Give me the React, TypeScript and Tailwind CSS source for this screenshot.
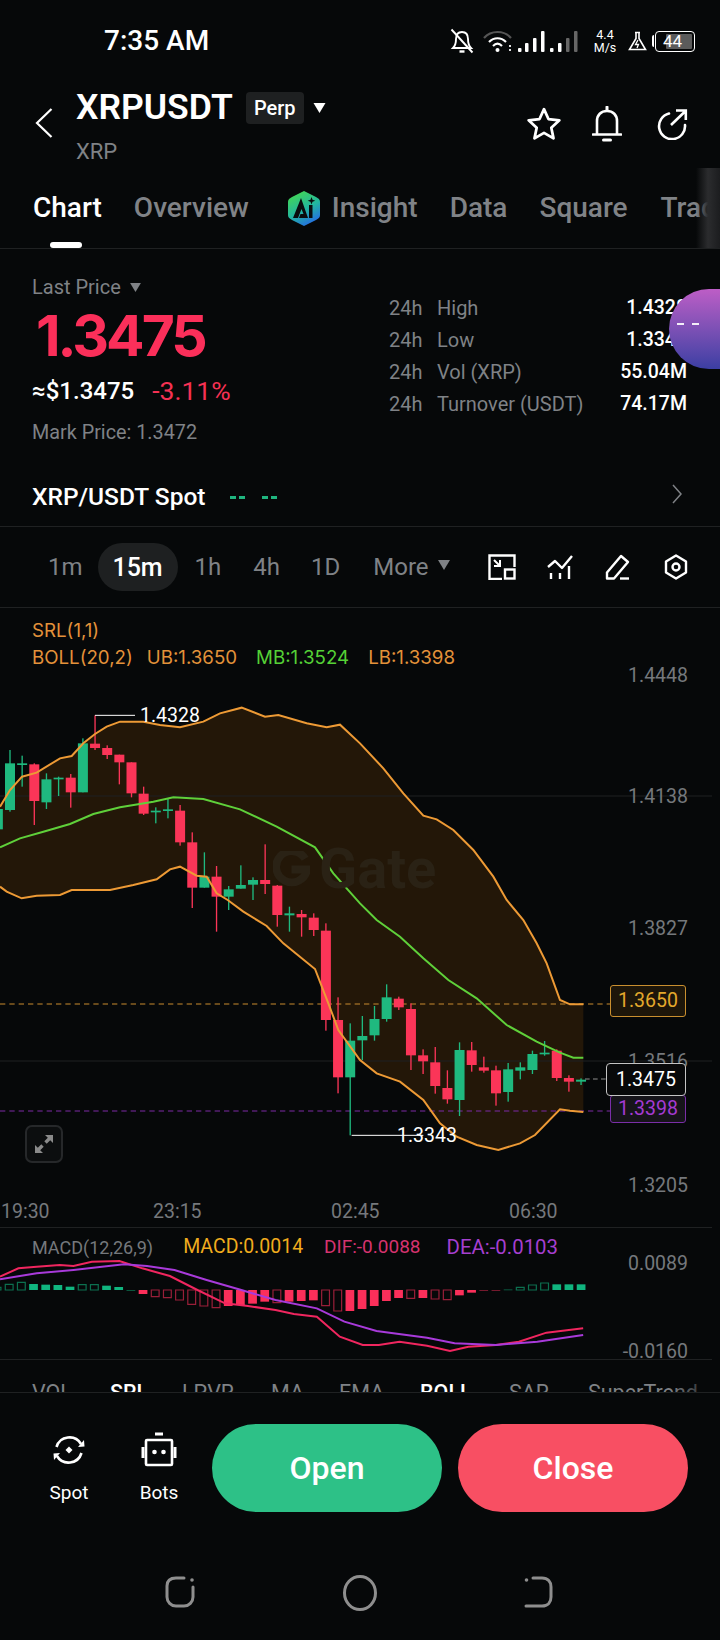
import { Fragment } from "react";

// [wickTop, bodyTop, bodyBottom, wickBottom, up?] in 1/3 px, chart viewBox units
type Candle = [number, number, number, number, boolean];

const UPPER_CANDLES: Candle[] = [
  [560, 597, 658, 680, true],
  [420, 460, 600, 605, true],
  [437, 460, 465, 530, true],
  [460, 463, 573, 645, false],
  [490, 508, 577, 597, true],
  [500, 503, 508, 558, true],
  [492, 503, 547, 593, false],
  [385, 400, 547, 547, true],
  [316, 401, 414, 420, false],
  [406, 414, 435, 447, false],
  [434, 434, 457, 523, false],
  [457, 457, 550, 562, false],
  [530, 551, 611, 615, false],
  [592, 602, 607, 640, true],
  [565, 598, 603, 625, true],
  [585, 602, 697, 707, false],
  [667, 697, 833, 894, false],
  [727, 800, 833, 833, true],
  [768, 800, 860, 965, false],
  [828, 838, 860, 900, true],
  [766, 825, 836, 836, true],
  [802, 810, 824, 870, true],
  [703, 810, 822, 852, false],
  [825, 827, 915, 950, false],
];

// same units, measured 870 lower (the second half of the chart)
const LOWER_CANDLES: Candle[] = [
  [20, 40, 46, 95, true],
  [30, 42, 52, 110, false],
  [40, 53, 90, 108, false],
  [70, 92, 360, 392, false],
  [292, 360, 532, 580, false],
  [370, 422, 532, 706, true],
  [348, 408, 421, 480, true],
  [318, 357, 406, 422, true],
  [253, 292, 357, 365, true],
  [290, 296, 322, 330, false],
  [310, 327, 466, 510, false],
  [448, 466, 484, 522, false],
  [441, 487, 558, 581, false],
  [511, 564, 598, 611, false],
  [427, 450, 600, 648, true],
  [426, 451, 495, 515, false],
  [470, 502, 512, 518, false],
  [497, 511, 580, 617, false],
  [489, 508, 576, 605, true],
  [487, 502, 512, 538, true],
  [452, 462, 510, 522, true],
  [423, 458, 463, 467, true],
  [448, 452, 534, 543, false],
  [526, 534, 545, 575, false],
  [535, 539, 545, 555, true],
];

const CANDLES: Candle[] = [
  ...UPPER_CANDLES,
  ...LOWER_CANDLES.map(
    ([a, b, c, d, up]) => [a + 870, b + 870, c + 870, d + 870, up] as Candle,
  ),
];

const BAND_UP =
  "0,590 30,540 66,500 110,488 180,445 215,438 250,400 285,372 320,350 360,335 430,335 480,345 540,352 610,335 660,310 725,293 795,320 835,315 920,340 980,352 1020,344 1080,400 1150,475 1210,550 1270,617 1310,628 1360,660 1420,720 1480,800 1520,870 1570,930 1610,1000 1640,1060 1680,1170 1710,1183 1750,1183";
const BAND_LOW =
  "1750,1506 1710,1502 1680,1498 1605,1575 1560,1600 1495,1620 1430,1605 1370,1580 1320,1540 1270,1470 1200,1415 1130,1390 1080,1350 1015,1260 985,1180 945,1077 850,1000 800,948 730,905 683,870 650,850 620,800 590,797 540,770 510,778 470,808 400,825 330,840 215,840 180,855 110,857 65,865 20,845 0,830";
const BAND_MID =
  "0,712 60,685 130,665 210,642 280,612 360,592 460,575 520,562 610,567 720,598 830,650 945,712 1000,790 1080,880 1130,930 1200,980 1270,1045 1345,1110 1430,1165 1520,1245 1610,1295 1680,1328 1720,1343 1750,1343";

const DIF_LINE =
  "0,230 40,205 80,200 130,195 160,198 200,185 260,183 310,205 370,228 430,270 490,310 540,318 600,330 640,342 690,350 740,410 790,435 825,435 870,425 930,437 980,453 1020,440 1080,435 1130,425 1190,398 1270,385";
const DEA_LINE =
  "0,238 80,220 160,210 270,193 320,198 380,210 450,240 520,268 600,300 690,325 750,365 820,393 930,413 990,430 1080,435 1170,425 1270,405";

// [edge of the bar in crop units, filled?]; baseline is 270
const HISTOGRAM: [number, boolean][] = [
  [262, false], [253, false], [247, false], [252, true], [254, true], [255, true], [260, true],
  [254, false], [254, false], [257, true], [261, true], [270, true],
  [282, true], [290, false], [293, false], [300, false], [313, false], [318, false],
  [323, false], [318, true], [315, true], [311, true], [305, true], [308, false],
  [305, true], [303, true], [301, true], [317, false], [333, false], [333, true],
  [327, true], [318, true], [303, true], [294, true], [295, false], [294, true],
  [297, false], [299, false], [286, true], [278, true], [272, true], [272, true],
  [268, true], [262, false], [255, false], [249, false], [253, true], [253, true], [253, true],
];

const STATS = [
  { label: "High", value: "1.4328" },
  { label: "Low", value: "1.3343" },
  { label: "Vol (XRP)", value: "55.04M" },
  { label: "Turnover (USDT)", value: "74.17M" },
];

const INDICATORS = [
  { name: "VOL", w: "w-[78px]" },
  { name: "SRL", w: "w-[72px]", on: true },
  { name: "LPVR", w: "w-[89px]" },
  { name: "MA", w: "w-[68px]" },
  { name: "EMA", w: "w-[81px]" },
  { name: "BOLL", w: "w-[89px]", on: true },
  { name: "SAR", w: "w-[79px]" },
  { name: "SuperTrend", w: "w-[130px]" },
];

function Triangle({ className }: { className: string }) {
  return (
    <svg viewBox="0 0 12 10" className={className} fill="currentColor">
      <path d="M0 0h12L6 10z" />
    </svg>
  );
}

function StatusBar() {
  return (
    <div className="flex h-[76px] shrink-0 items-center pl-[104px] pr-[25px] pt-[6px]">
      <span className="text-[28px] font-medium leading-none text-white">7:35 AM</span>
      <svg viewBox="0 0 24 26" className="ml-auto h-[26px] w-[24px]" fill="none" stroke="#fff" strokeWidth="1.9">
        <path d="M3 20c2-2 3-5 3-9 0-4 2-7 6-7s6 3 6 7c0 4 1 7 3 9z" />
        <path d="M9.500 23.500h5" strokeWidth="2.400" />
        <path d="M1.500 1.500l21 23" />
      </svg>
      <svg viewBox="0 0 98 24" className="ml-[9px] h-[24px] w-[98px]">
        <path d="M1 9C8 1 21 1 28 9" fill="none" stroke="#555" strokeWidth="2.2" />
        <path d="M6 13c5-5 12-5 17 0M10 17c3-3 6-3 9 0" fill="none" stroke="#fff" strokeWidth="2.2" />
        <circle cx="14.5" cy="21" r="2" fill="#fff" />
        <path d="M26 16h2v2h-2zM26 20h2v2h-2z" fill="#ddd" />
        <g fill="#fff">
          <rect x="35" y="19" width="3.5" height="4" rx="1" />
          <rect x="42" y="14" width="3.5" height="9" rx="1" />
          <rect x="50" y="9" width="3.5" height="14" rx="1" />
          <rect x="58" y="2" width="3.5" height="21" rx="1" />
          <rect x="67" y="19" width="3.5" height="4" rx="1" />
          <rect x="75" y="14" width="3.5" height="9" rx="1" />
        </g>
        <rect x="83" y="9" width="3.5" height="14" rx="1" fill="#666" />
        <rect x="91" y="2" width="3.5" height="21" rx="1" fill="#666" />
      </svg>
      <div className="ml-[13px] flex w-[22px] flex-col items-center text-[12.5px] leading-[13px] text-white">
        <span>4.4</span>
        <span>M/s</span>
      </div>
      <svg viewBox="0 0 19 20" className="ml-[12px] h-[20px] w-[19px]" fill="none" stroke="#fff" strokeWidth="1.6">
        <path d="M7 1.500h5M8 1.500v6L1.500 18.500h16L11 7.500v-6" />
        <path d="M10 9l-2.500 4.500h3L9 17" strokeWidth="1.300" />
      </svg>
      <div className="ml-[5px] h-[12px] w-[2px] rounded-l-sm bg-white" />
      <div className="relative ml-[1px] flex h-[21px] w-[40px] items-center overflow-hidden rounded-[4px] border-[1.5px] border-white pl-[7px] text-[17px] leading-none text-white">
        <div className="absolute inset-y-[2px] left-[25%] right-[2px] rounded-[1px] bg-[#5b5b5b]" />
        <span className="relative">44</span>
      </div>
    </div>
  );
}

function Header() {
  return (
    <div className="flex h-[92px] shrink-0 items-start pl-[35px] pr-[32px]">
      <svg viewBox="0 0 18 30" className="mt-[32px] h-[30px] w-[18px]" fill="none" stroke="#fff" strokeWidth="2.2">
        <path d="M16.500 1L2 15l14.500 14" />
      </svg>
      <div className="ml-[23px] mt-[8px] flex flex-col">
        <div className="flex h-[48px] items-center">
          <span className="text-[35.5px] font-semibold leading-none text-white">XRPUSDT</span>
          <span className="ml-[13px] flex h-[32px] w-[58px] items-center justify-center rounded-[4px] bg-[#1e2021] text-[20px] font-medium text-white">
            Perp
          </span>
          <Triangle className="ml-[8px] h-[10px] w-[15px] text-white" />
        </div>
        <span className="mt-[7px] text-[22px] leading-[26px] text-[#7f8286]">XRP</span>
      </div>
      <div className="ml-auto mt-[30px] flex items-center">
        <svg viewBox="0 0 34 34" className="h-[36px] w-[36px]" fill="none" stroke="#fff" strokeWidth="2.6" strokeLinejoin="round">
          <path d="M17 3l4.200 9.300 10.300 1.200-7.600 7 2.100 10.100-9-5.200-9 5.200 2.100-10.100-7.600-7 10.300-1.200z" />
        </svg>
        <svg viewBox="0 0 30 36" className="ml-[30px] h-[36px] w-[30px]" fill="none" stroke="#fff" strokeWidth="2.6">
          <path d="M5 28V15c0-6 4-10 10-10s10 4 10 10v13" />
          <path d="M1 28.500h28" strokeLinecap="round" />
          <path d="M15 1v3M11.500 34h7" strokeLinecap="round" strokeWidth="3" />
        </svg>
        <svg viewBox="0 0 32 32" className="ml-[34px] h-[32px] w-[32px]" fill="none" stroke="#fff" strokeWidth="2.6">
          <path d="M13 5.500A13 13 0 1 0 29 17" strokeLinecap="round" />
          <path d="M15 17L29.500 3M20 2.500h9.800V12" />
        </svg>
      </div>
    </div>
  );
}

function InsightIcon() {
  return (
    <svg viewBox="0 0 34 37" className="h-[37px] w-[34px]">
      <defs>
        <linearGradient id="insight" x1="0.2" y1="0" x2="0.7" y2="1">
          <stop offset="0" stopColor="#45d94f" />
          <stop offset="0.55" stopColor="#22b6a0" />
          <stop offset="1" stopColor="#2468e8" />
        </linearGradient>
      </defs>
      <path d="M17 1l12 6c3 1.500 4 3 4 5v13c0 2-1 3.500-4 5l-12 6-12-6c-3-1.500-4-3-4-5V12c0-2 1-3.500 4-5z" fill="url(#insight)" />
      <path d="M14 8L6 28h5l3.500-9 2 5h-3l-1.500 4h9z" fill="#0a0c0e" />
      <path d="M22 15h3.500v13H22z" fill="#0a0c0e" />
      <path d="M24.500 7l1 2.800 2.800 1-2.800 1-1 2.800-1-2.800-2.800-1 2.800-1z" fill="#0a0c0e" />
    </svg>
  );
}

function Tabs() {
  return (
    <div className="relative flex h-[81px] shrink-0 overflow-hidden border-b border-[#1f2122] pl-[33px] text-[28px] leading-none text-[#808387]">
      <div className="relative flex h-full items-start pt-[26px] font-medium text-white">
        Chart
        <div className="absolute bottom-0 left-[17px] h-[6px] w-[32px] rounded-full bg-white" />
      </div>
      <span className="ml-[32px] shrink-0 pt-[26px] font-medium">Overview</span>
      <span className="ml-[38px] mt-[22px] flex h-[37px] shrink-0">
        <InsightIcon />
      </span>
      <span className="ml-[11px] shrink-0 pt-[26px] font-medium">Insight</span>
      <span className="ml-[32px] shrink-0 pt-[26px] font-medium">Data</span>
      <span className="ml-[32px] shrink-0 pt-[26px] font-medium">Square</span>
      <span className="ml-[33px] shrink-0 pt-[26px] font-medium">Trade</span>
      <div className="absolute inset-y-0 right-0 w-[24px] bg-gradient-to-r from-transparent via-[#2b2c2e] to-[#1c1d1f]" />
    </div>
  );
}

function Stats() {
  return (
    <div className="flex h-[278px] shrink-0 flex-col border-b border-[#1f2122]">
      <div className="flex flex-1 pl-[32px] pr-[33px] pt-[26px]">
        <div className="flex w-[357px] flex-col">
          <div className="flex h-[24px] items-center text-[20px] text-[#7f8286]">
            Last Price
            <Triangle className="ml-[8px] h-[9px] w-[13px]" />
          </div>
          <span className="mt-[7px] pl-[4px] font-['Inter',sans-serif] text-[57px] font-bold leading-[60px] tracking-[-3px] text-[#fb2f5a]">
            1.3475
          </span>
          <div className="mt-[9px] flex h-[32px] items-center text-[24px]">
            <span className="font-medium text-white">≈$1.3475</span>
            <span className="ml-[18px] text-[26.5px] text-[#f53153]">-3.11%</span>
          </div>
          <span className="mt-[14px] text-[19.8px] leading-[24px] text-[#7f8286]">Mark Price: 1.3472</span>
        </div>
        <div className="flex flex-1 flex-col pt-[17px]">
          {STATS.map((s) => (
            <div key={s.label} className="flex h-[32px] items-center text-[20px] text-[#7f8286]">
              <span className="w-[48px]">24h</span>
              <span>{s.label}</span>
              <span className="ml-auto text-[19.5px] font-medium text-white">{s.value}</span>
            </div>
          ))}
        </div>
      </div>
      <div className="flex h-[60px] items-center pl-[32px] pr-[38px] pt-[2px]">
        <span className="text-[24.5px] font-medium text-white">XRP/USDT Spot</span>
        <span className="ml-[25px] h-[2px] w-[15px] border-t-[3px] border-dashed border-[#1fb57f]" />
        <span className="ml-[17px] h-[2px] w-[15px] border-t-[3px] border-dashed border-[#1fb57f]" />
        <svg viewBox="0 0 10 20" className="mb-[6px] ml-auto h-[20px] w-[10px]" fill="none" stroke="#7f8286" strokeWidth="1.5">
          <path d="M1 1l8 9-8 9" />
        </svg>
      </div>
    </div>
  );
}

function Intervals() {
  return (
    <div className="flex h-[81px] shrink-0 items-center border-b border-[#1f2122] pl-[48px] text-[24px] leading-none text-[#7f8286]">
      <span>1m</span>
      <span className="ml-[15px] flex h-[48px] w-[80px] shrink-0 items-center justify-center rounded-full bg-[#1e2021] text-[25px] font-medium text-white">
        15m
      </span>
      <span className="ml-[17px]">1h</span>
      <span className="ml-[32px]">4h</span>
      <span className="ml-[31px]">1D</span>
      <span className="ml-[33px]">More</span>
      <Triangle className="mb-[4px] ml-[9px] h-[10px] w-[12px] shrink-0" />
      <svg viewBox="0 0 28 26" className="ml-[38px] h-[26px] w-[28px] shrink-0" fill="none" stroke="#fff" strokeWidth="2.4">
        <path d="M14 25H1.500V1.500h25V13" />
        <path d="M6 6l6 6M6 12h6V6" strokeWidth="2" />
        <rect x="17" y="15.500" width="9.500" height="9" />
      </svg>
      <svg viewBox="0 0 26 26" className="ml-[31px] h-[26px] w-[26px] shrink-0" fill="none" stroke="#fff" strokeWidth="2.4">
        <path d="M1 13l7-6 7 7L25 2" strokeLinejoin="round" />
        <path d="M4 19v6M13 19v6M22 12v13" />
      </svg>
      <svg viewBox="0 0 26 26" className="ml-[32px] h-[26px] w-[26px] shrink-0" fill="none" stroke="#fff" strokeWidth="2.4" strokeLinejoin="round">
        <path d="M2 24.500v-6L16 2l7 6L9 24.500z" />
        <path d="M15 24.500h9" />
      </svg>
      <svg viewBox="0 0 24 26" className="ml-[33px] h-[26px] w-[24px] shrink-0" fill="none" stroke="#fff" strokeWidth="2.4" strokeLinejoin="round">
        <path d="M12 1.500l10 6v11l-10 6-10-6v-11z" />
        <circle cx="12" cy="13" r="3.500" />
      </svg>
    </div>
  );
}

function PriceChart() {
  return (
    <div className="relative h-[587px] shrink-0 overflow-hidden">
      <svg viewBox="0 -6 2160 1761" className="absolute inset-0 h-[587px] w-[720px]">
        <path d={`M${BAND_UP} L${BAND_LOW}z`} fill="#231708" />
        <path d="M0 558h2136M0 1353h2136" stroke="#1f2122" strokeWidth="3" />
        <path d="M0 1182h1830" stroke="#c98b2e" strokeWidth="3" strokeDasharray="16 12" />
        <path d="M0 1503h1830" stroke="#7c2aa6" strokeWidth="3" strokeDasharray="16 12" />
        <path d="M1755 1407h63" stroke="#8d8d8d" strokeWidth="3" strokeDasharray="14 10" />
        {CANDLES.map(([wt, bt, bb, wb, up], i) => {
          const x = 30 + 36.45 * (i - 1);
          const fill = up ? "#1fb97f" : "#fb3558";
          return (
            <Fragment key={i}>
              <rect x={x - 2} y={wt} width="4" height={wb - wt} fill={fill} />
              <rect x={x - 15} y={bt} width="30" height={Math.max(bb - bt, 5)} fill={fill} />
            </Fragment>
          );
        })}
        <polyline points={BAND_UP} fill="none" stroke="#ed9a35" strokeWidth="6" />
        <polyline points={BAND_LOW} fill="none" stroke="#ed9a35" strokeWidth="6" />
        <polyline points={BAND_MID} fill="none" stroke="#5fd03a" strokeWidth="6" />
        <path d="M285 316h120" stroke="#fff" strokeWidth="3" />
        <path d="M1055 1576h215" stroke="#fff" strokeWidth="3" />
      </svg>

      <div className="relative flex flex-col pl-[32px] pt-[9px] font-['Inter',sans-serif] text-[18.7px] leading-[27px] text-[#e3923a]">
        <span>SRL(1,1)</span>
        <div className="flex">
          <span>BOLL(20,2)</span>
          <span className="ml-[14px]">UB:1.3650</span>
          <span className="ml-[19px] text-[#55d136]">MB:1.3524</span>
          <span className="ml-[19px]">LB:1.3398</span>
        </div>
      </div>

      <div className="absolute left-[273px] top-[233px] flex items-center gap-[9px] text-[#2a2215]">
        <svg viewBox="0 0 38 38" className="h-[37px] w-[37px]" fill="none" stroke="currentColor" strokeWidth="8">
          <path d="M33 8A16 16 0 1 0 35 19H19" />
        </svg>
        <span className="text-[56px] font-bold leading-none">Gate</span>
      </div>

      {[
        ["1.4448", "top-[56px]"],
        ["1.4138", "top-[177px]"],
        ["1.3827", "top-[309px]"],
        ["1.3516", "top-[442px]"],
        ["1.3205", "top-[566px]"],
      ].map(([price, top]) => (
        <span key={price} className={`absolute right-[32px] text-[19.5px] leading-[24px] text-[#75787c] ${top}`}>
          {price}
        </span>
      ))}

      <span className="absolute left-[140px] top-[96px] text-[19.5px] leading-[24px] text-white">1.4328</span>
      <span className="absolute left-[397px] top-[516px] text-[19.5px] leading-[24px] text-white">1.3343</span>

      <div className="absolute left-[610px] top-[377px] flex h-[32px] w-[76px] items-center justify-center rounded-[3px] border border-[#c98f2f] bg-[#1d160a] text-[19.5px] text-[#e4a92c]">
        1.3650
      </div>
      <div className="absolute left-[610px] top-[487px] flex h-[28px] w-[76px] items-center justify-center rounded-[3px] border border-[#7a2ea8] bg-[#16141a] text-[19.5px] text-[#a53ad3]">
        1.3398
      </div>
      <div className="absolute left-[606px] top-[455px] flex h-[33px] w-[80px] items-center justify-center rounded-[4px] border-[1.5px] border-[#c4c4c4] bg-[#08090a] text-[19.5px] text-white">
        1.3475
      </div>

      <button className="absolute left-[25px] top-[517px] flex h-[38px] w-[38px] items-center justify-center rounded-[7px] border-2 border-[#26282a] bg-[#0c0e0f]">
        <svg viewBox="0 0 20 20" className="h-[20px] w-[20px]" fill="#8a8a8a">
          <path d="M11 1h8v8l-2.800-2.800-3.500 3.500-2.400-2.400 3.500-3.500zM1 19v-8l2.800 2.800 3.500-3.500 2.400 2.400-3.500 3.500L9 19z" />
        </svg>
      </button>
    </div>
  );
}

function TimeAxis() {
  return (
    <div className="relative mr-[8px] h-[33px] shrink-0 border-b border-[#1f2122] text-[19.5px] leading-[24px] text-[#75787c]">
      <span className="absolute left-[1px] top-[5px]">19:30</span>
      <span className="absolute left-[153px] top-[5px]">23:15</span>
      <span className="absolute left-[331px] top-[5px]">02:45</span>
      <span className="absolute left-[509px] top-[5px]">06:30</span>
    </div>
  );
}

function MacdPanel() {
  return (
    <div className="relative mr-[8px] h-[132px] shrink-0 overflow-hidden border-b border-[#1f2122]">
      <svg viewBox="0 0 1568 480" className="absolute left-0 top-[-28px] h-[160px] w-[720px]" preserveAspectRatio="none">
        {HISTOGRAM.map(([edge, filled], i) => {
          const x = -6.5 + 26.5 * i;
          const y = Math.min(edge, 270);
          const h = Math.max(Math.abs(edge - 270), 3);
          const color = edge <= 270 ? "#10b57f" : "#fb2f5a";
          return filled ? (
            <rect key={i} x={x - 9.5} y={y} width="19" height={h} fill={color} opacity={h < 4 ? 0.45 : 1} />
          ) : (
            <rect key={i} x={x - 8.5} y={y} width="17" height={h} fill="none" stroke={color} strokeOpacity="0.6" strokeWidth={1.2} vectorEffect="non-scaling-stroke" />
          );
        })}
        <polyline points={DIF_LINE} fill="none" stroke="#f0265f" strokeWidth={2} vectorEffect="non-scaling-stroke" />
        <polyline points={DEA_LINE} fill="none" stroke="#a83ada" strokeWidth={2} vectorEffect="non-scaling-stroke" />
      </svg>
      <div className="relative flex h-[38px] items-center pl-[32px]">
        <span className="text-[18px] text-[#75787c]">MACD(12,26,9)</span>
        <span className="ml-[30px] text-[19.5px] text-[#f0ac1e]">MACD:0.0014</span>
        <span className="ml-[21px] text-[19px] text-[#d6336f]">DIF:-0.0088</span>
        <span className="ml-[26px] text-[20.4px] text-[#a53fd0]">DEA:-0.0103</span>
      </div>
      <span className="absolute right-[24px] top-[24px] text-[19.5px] leading-[24px] text-[#75787c]">0.0089</span>
      <span className="absolute right-[24px] top-[112px] text-[19.5px] leading-[24px] text-[#75787c]">-0.0160</span>
    </div>
  );
}

function IndicatorTabs() {
  return (
    <div className="relative flex h-[33px] shrink-0 items-start overflow-hidden border-b border-[#1f2122] pl-[32px] text-[21.5px] leading-none text-[#7f8286]">
      {INDICATORS.map((it) => (
        <span key={it.name} className={`shrink-0 pt-[22px] ${it.w} ${it.on ? "font-medium text-white" : ""}`}>
          {it.name}
        </span>
      ))}
      <div className="absolute inset-y-0 right-0 w-[50px] bg-gradient-to-r from-transparent to-[#060809]" />
    </div>
  );
}

function Actions() {
  return (
    <div className="flex h-[152px] shrink-0 items-start pl-[44px] pr-[32px] pt-[31px]">
      <div className="flex w-[50px] flex-col items-center pt-[8px] text-[19px] leading-[24px] text-white">
        <svg viewBox="0 0 36 36" className="h-[36px] w-[36px]" fill="none" stroke="#fff" strokeWidth="2.6">
          <path d="M5.500 15A13.500 13.500 0 0 1 30 12" />
          <path d="M30.500 21A13.500 13.500 0 0 1 6 24" />
          <path d="M27 15l6.500-.5-.5-6.500zM9 21l-6.500.5.500 6.500z" fill="#fff" stroke="none" />
          <path d="M18 14.500l3.500 3.500-3.500 3.500-3.500-3.500z" fill="#fff" stroke="none" />
        </svg>
        <span className="mt-[13px]">Spot</span>
      </div>
      <div className="ml-[40px] flex w-[50px] flex-col items-center pt-[8px] text-[19px] leading-[24px] text-white">
        <svg viewBox="0 0 36 36" className="h-[36px] w-[36px]" fill="none" stroke="#fff" strokeWidth="2.6">
          <rect x="5" y="8" width="26" height="25" rx="1" />
          <path d="M14 2h8" strokeWidth="3" />
          <path d="M2 15v11M34 15v11" strokeWidth="3" />
          <circle cx="13.500" cy="20" r="2.300" fill="#fff" stroke="none" />
          <circle cx="22.500" cy="20" r="2.300" fill="#fff" stroke="none" />
        </svg>
        <span className="mt-[13px]">Bots</span>
      </div>
      <button className="ml-[28px] flex h-[88px] w-[230px] items-center justify-center rounded-[44px] bg-[#2dc187] text-[32px] font-medium text-white">
        Open
      </button>
      <button className="ml-[16px] flex h-[88px] w-[230px] items-center justify-center rounded-[44px] bg-[#f84f63] text-[32px] font-medium text-white">
        Close
      </button>
    </div>
  );
}

function NavBar() {
  return (
    <div className="flex flex-1 items-start pl-[164px] pt-[30px]">
      <svg viewBox="0 0 32 34" className="h-[34px] w-[32px]" fill="none" stroke="#8e8e8e" strokeWidth="3">
        <path d="M20 3h-8C6 3 3 6 3 11v11c0 5 4 9 9 9h8c5 0 9-4 9-9V12" strokeLinecap="round" />
        <circle cx="28" cy="5" r="1.800" fill="#8e8e8e" stroke="none" />
      </svg>
      <svg viewBox="0 0 36 36" className="ml-[146px] h-[36px] w-[36px]" fill="none" stroke="#8e8e8e" strokeWidth="3">
        <ellipse cx="18" cy="18" rx="15.500" ry="16.500" />
      </svg>
      <svg viewBox="0 0 30 34" className="ml-[146px] h-[34px] w-[30px]" fill="none" stroke="#8e8e8e" strokeWidth="3">
        <path d="M9 3h9c6 0 9 4 9 9v10c0 5-3 9-9 9H2" strokeLinecap="round" />
        <circle cx="2.500" cy="5" r="1.800" fill="#8e8e8e" stroke="none" />
      </svg>
    </div>
  );
}

export default function App() {
  return (
    <div className="relative flex h-[1640px] w-[720px] flex-col overflow-hidden bg-[#060809] [font-family:Roboto,sans-serif]">
      <StatusBar />
      <Header />
      <Tabs />
      <Stats />
      <Intervals />
      <PriceChart />
      <TimeAxis />
      <MacdPanel />
      <IndicatorTabs />
      <Actions />
      <NavBar />
      {/* floating assistant bubble, stuck to the right edge */}
      <div className="absolute right-0 top-[289px] flex h-[80px] w-[51px] items-start gap-[8px] rounded-l-[40px] bg-gradient-to-b from-[#bd5dc6] to-[#3b3ea3] pl-[8px] pt-[34px]">
        <span className="h-[2px] w-[7px] bg-white/90" />
        <span className="h-[2px] w-[7px] bg-white/90" />
      </div>
    </div>
  );
}
